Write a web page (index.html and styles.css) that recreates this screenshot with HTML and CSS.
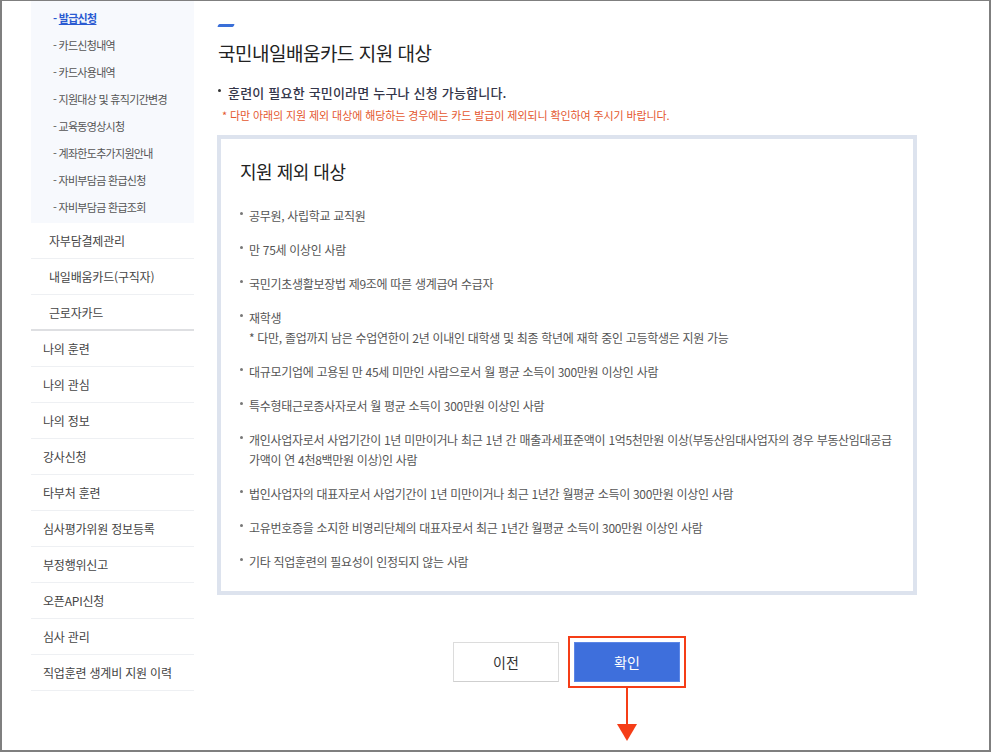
FILE: index.html
```html
<!DOCTYPE html>
<html lang="ko">
<head>
    <meta charset="UTF-8">
    <meta name="viewport" content="width=device-width, initial-scale=1.0">
    <title>국민내일배움카드 지원 대상</title>
    <link rel="stylesheet" href="styles.css">
</head>
<body>
    <div class="frame">
        <aside class="side">
            <ul class="sub">
                <li class="on">- <a href="#">발급신청</a></li>
                <li>- 카드신청내역</li>
                <li>- 카드사용내역</li>
                <li>- 지원대상 및 휴직기간변경</li>
                <li>- 교육동영상시청</li>
                <li>- 계좌한도추가지원안내</li>
                <li>- 자비부담금 환급신청</li>
                <li>- 자비부담금 환급조회</li>
            </ul>
            <ul class="menu">
                <li class="depth2">자부담결제관리</li>
                <li class="depth2">내일배움카드(구직자)</li>
                <li class="depth2 last">근로자카드</li>
                <li>나의 훈련</li>
                <li>나의 관심</li>
                <li>나의 정보</li>
                <li>강사신청</li>
                <li>타부처 훈련</li>
                <li>심사평가위원 정보등록</li>
                <li>부정행위신고</li>
                <li>오픈API신청</li>
                <li>심사 관리</li>
                <li>직업훈련 생계비 지원 이력</li>
            </ul>
        </aside>

        <main class="content">
            <span class="dash"></span>
            <h1 class="title">국민내일배움카드 지원 대상</h1>
            <p class="lead"><span class="dot"></span>훈련이 필요한 국민이라면 누구나 신청 가능합니다.</p>
            <p class="notice">* 다만 아래의 지원 제외 대상에 해당하는 경우에는 카드 발급이 제외되니 확인하여 주시기 바랍니다.</p>

            <div class="box">
                <h2 class="box-title">지원 제외 대상</h2>
                <ul class="list">
                    <li><span class="dot"></span><div>공무원, 사립학교 교직원</div></li>
                    <li><span class="dot"></span><div>만 75세 이상인 사람</div></li>
                    <li><span class="dot"></span><div>국민기초생활보장법 제9조에 따른 생계급여 수급자</div></li>
                    <li><span class="dot"></span><div>재학생<br>* 다만, 졸업까지 남은 수업연한이 2년 이내인 대학생 및 최종 학년에 재학 중인 고등학생은 지원 가능</div></li>
                    <li><span class="dot"></span><div>대규모기업에 고용된 만 45세 미만인 사람으로서 월 평균 소득이 300만원 이상인 사람</div></li>
                    <li><span class="dot"></span><div>특수형태근로종사자로서 월 평균 소득이 300만원 이상인 사람</div></li>
                    <li><span class="dot"></span><div>개인사업자로서 사업기간이 1년 미만이거나 최근 1년 간 매출과세표준액이 1억5천만원 이상(부동산임대사업자의 경우 부동산임대공급<br>가액이 연 4천8백만원 이상)인 사람</div></li>
                    <li><span class="dot"></span><div>법인사업자의 대표자로서 사업기간이 1년 미만이거나 최근 1년간 월평균 소득이 300만원 이상인 사람</div></li>
                    <li><span class="dot"></span><div>고유번호증을 소지한 비영리단체의 대표자로서 최근 1년간 월평균 소득이 300만원 이상인 사람</div></li>
                    <li><span class="dot"></span><div>기타 직업훈련의 필요성이 인정되지 않는 사람</div></li>
                </ul>
            </div>

            <div class="btns">
                <button type="button" class="btn btn-prev">이전</button>
                <div class="mark">
                    <button type="button" class="btn btn-ok">확인</button>
                    <span class="arrow"></span>
                </div>
            </div>
        </main>
    </div>
</body>
</html>
```

FILE: styles.css
```css
html, body{
    margin: 0;
    padding: 0;
}
body{
    font-family: "Noto Sans CJK KR", "Noto Sans", sans-serif;
    background: #fff;
    color: #333;
}
ul{
    list-style: none;
    margin: 0;
    padding: 0;
}
.frame{
    width: 991px;
    height: 752px;
    box-sizing: border-box;
    border: 2px solid #7f7f7f;
    border-top-width: 1px;
    display: flex;
    overflow: hidden;
}

/* sidebar */
.side{
    width: 163px;
    margin-left: 29px;
    flex-shrink: 0;
}
.sub{
    background: #f7f9fd;
    padding: 4px 0 2px 22px;
}
.sub li{
    height: 27px;
    line-height: 27px;
    font-size: 11px;
    letter-spacing: -0.7px;
    color: #555;
}
.sub li.on{
    color: #2b5bd1;
    font-weight: 700;
}
.sub li.on a{
    color: #2b5bd1;
    text-decoration: underline;
}
.menu li{
    height: 35px;
    line-height: 35px;
    border-bottom: 1px solid #eef0f3;
    padding-left: 12px;
    font-size: 12px;
    letter-spacing: -0.2px;
    color: #444;
}
.menu li.depth2{
    padding-left: 18px;
}
.menu li.last{
    height: 34px;
    border-bottom: 2px solid #dedfe2;
}

/* content */
.content{
    width: 700px;
    margin-left: 23px;
    padding-top: 23px;
}
.dash{
    display: block;
    width: 16px;
    height: 3px;
    margin-left: 1px;
    background: #3a6fd8;
    border-radius: 1px;
    transform: skewX(-30deg);
}
.title{
    margin: 12px 0 0 1px;
    font-size: 19px;
    line-height: 28px;
    font-weight: 400;
    letter-spacing: -0.5px;
    color: #222;
}
.lead{
    margin: 16px 0 0 1px;
    font-size: 13px;
    line-height: 20px;
    font-weight: 500;
    letter-spacing: 0.2px;
    color: #34364a;
    display: flex;
    align-items: flex-start;
}
.lead .dot{
    background: #333;
    margin: 6px 7px 0 0;
}
.notice{
    margin: 4px 0 0 5px;
    font-size: 11px;
    line-height: 16px;
    letter-spacing: -0.1px;
    color: #e4572e;
}
.dot{
    width: 3px;
    height: 3px;
    border-radius: 50%;
    background: #777;
    flex-shrink: 0;
}

.box{
    margin-top: 12px;
    height: 460px;
    box-sizing: border-box;
    border: 4px solid #dde3ee;
    padding: 19px 19px 0 19px;
}
.box-title{
    margin: 0;
    font-size: 18px;
    line-height: 26px;
    font-weight: 400;
    letter-spacing: -0.5px;
    color: #222;
}
.list{
    margin-top: 22px;
}
.list li{
    display: flex;
    align-items: flex-start;
    font-size: 12px;
    line-height: 20px;
    letter-spacing: -0.3px;
    color: #555;
    margin-bottom: 14px;
}
.list li .dot{
    margin: 6px 6px 0 0;
}

/* buttons */
.btns{
    display: flex;
    justify-content: center;
    align-items: center;
    gap: 9px;
    margin-top: 41px;
    padding-left: 5px;
}
.btn{
    width: 106px;
    height: 40px;
    font-family: inherit;
    font-size: 14px;
    font-weight: 400;
    cursor: pointer;
}
.btn-prev{
    background: #fff;
    color: #333;
    border: 1px solid #dcdcdc;
    border-bottom-color: #cfcfcf;
}
.btn-ok{
    background: #3e6fdc;
    color: #fff;
    border: 1px solid #5c86e6;
}
.mark{
    position: relative;
    border: 2px solid #f53d17;
    padding: 4px;
    display: flex;
}
.arrow{
    position: absolute;
    top: 100%;
    left: 50%;
    width: 2px;
    height: 38px;
    margin-left: -1px;
    margin-top: 2px;
    background: #f53d17;
}
.arrow::after{
    content: "";
    position: absolute;
    top: 36px;
    left: -9px;
    border-left: 10px solid transparent;
    border-right: 10px solid transparent;
    border-top: 17px solid #f53d17;
}
```
